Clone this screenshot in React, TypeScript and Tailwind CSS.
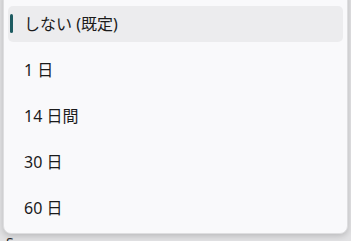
import React from 'react';

const options = ['しない (既定)', '1 日', '14 日間', '30 日', '60 日'];

export default function App() {
  const selected = 0;

  return (
    <div
      className="w-[351px] h-[241px] overflow-hidden bg-[#e2e2e4] flex flex-col"
      style={{ fontFamily: '"Noto Sans", "Noto Sans CJK JP", sans-serif' }}
    >
      <div className="mx-[3px] -mt-[8px] h-[242px] shrink-0 rounded-b-[8px] border border-[#dedee0] bg-[#f9f9fb] shadow-[0_2px_6px_rgba(0,0,0,0.18)] px-[4px] pt-[13px] flex flex-col gap-[10px]">
        {options.map((label, i) => (
          <div
            key={label}
            className={
              i === selected
                ? 'relative h-[36px] rounded-[5px] bg-[#ececee] flex items-center pl-[16px]'
                : 'relative h-[36px] rounded-[5px] flex items-center pl-[16px]'
            }
          >
            {i === selected && (
              <span className="absolute left-[2px] top-[8px] w-[3px] h-[19px] rounded-full bg-[#1d5b61]" />
            )}
            <span className="text-[16px] text-[#1b1b1b] leading-none">{label}</span>
          </div>
        ))}
      </div>
      <div className="pl-[6px] pt-[2px] text-[14px] leading-none text-[#2a2a2a]">S</div>
    </div>
  );
}
